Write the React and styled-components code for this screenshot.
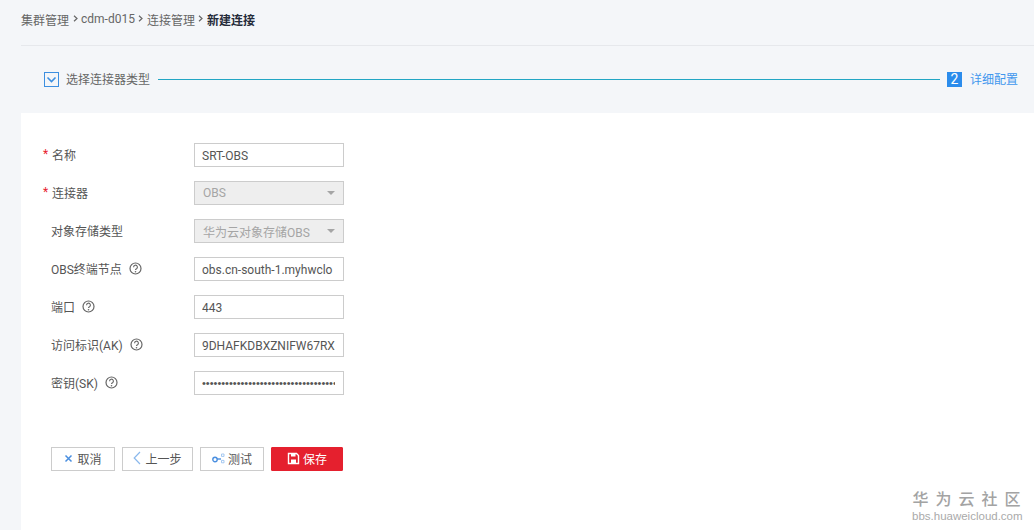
import React from "react";
import styled, { createGlobalStyle } from "styled-components";

const Global = createGlobalStyle`
  html, body { margin: 0; padding: 0; background: #f4f6f9; }
  body { font-family: "Roboto", "Noto Sans CJK SC", sans-serif; font-size: 12px; color: #666; }
`;
const Page = styled.div`
  position: relative;
  width: 1034px;
  height: 530px;
  overflow: hidden;
  display: flex;
  flex-direction: column;
  padding-left: 21px;
  box-sizing: border-box;
`;
const Crumbs = styled.div`
  border-bottom: 1px solid #e6e8ec;
  display: flex;
  align-items: center;
  padding-bottom: 7px;
  box-sizing: content-box;
  height: 38px;
  font-size: 12px;
  color: #666;
`;
const Crumb = styled.span`
  color: ${p => (p.$current ? "#252b3a" : "#666")};
  font-weight: ${p => (p.$current ? 700 : 400)};
`;
const Chevron = styled.svg`
  width: 5px;
  height: 7px;
  margin: 0 3.5px 2px 3.5px;
`;
const Stepper = styled.div`
  height: 67px;
  display: flex;
  align-items: center;
  padding-left: 23px;
`;
const Check = styled.span`
  width: 15px;
  height: 15px;
  display: flex;
  box-sizing: border-box;
  border: 1px solid #3d8fe0;
  align-items: center;
  justify-content: center;
  margin-right: 7px;
`;
const StepLine = styled.div`
  flex: none;
  width: 782px;
  height: 1px;
  background: #22a6c4;
  margin: 0 7px 0 8px;
`;
const StepNo = styled.span`
  width: 15px;
  height: 15px;
  background: #2b8cec;
  color: #fff;
  font-size: 14px;
  font-weight: 400;
  line-height: 15px;
  text-align: center;
  margin-right: 8px;
`;
const StepText = styled.span`
  color: ${p => (p.$active ? "#3f97ee" : "#666")};
  line-height: 15px;
  position: relative;
  top: 1px;
`;
const Panel = styled.main`
  flex: 1;
  background: #fff;
  padding: 30px 0 0 22px;
`;
const Row = styled.div`
  display: flex;
  align-items: center;
  height: 24px;
  margin-bottom: 14px;
`;
const Label = styled.label`
  width: 151px;
  flex: none;
  display: flex;
  align-items: center;
  padding-left: ${p => (p.$required ? 9 : 8)}px;
  padding-bottom: 2px;
  box-sizing: border-box;
  position: relative;
  color: #555;
`;
const Star = styled.span`
  position: absolute;
  left: 0;
  top: 1px;
  color: #e8212f;
`;
const Help = styled.svg`
  width: 13px;
  height: 13px;
  margin-left: 7px;
`;
const Input = styled.input`
  width: 150px;
  height: 24px;
  box-sizing: border-box;
  border: 1px solid #ccc;
  background: #fff;
  padding: 1px 8px 0 7px;
  font: 12px "Roboto", "Noto Sans CJK SC", sans-serif;
  color: #555;
  outline: none;
  &[type="password"] { font: 11px "Liberation Sans", sans-serif; padding-top: 0; }
`;
const Select = styled.div`
  width: 150px;
  height: 24px;
  box-sizing: border-box;
  border: 1px solid #ccc;
  background: #eee;
  color: #a5a5a5;
  padding: 0 8px 0 8px;
  display: flex;
  align-items: center;
  justify-content: space-between;
`;
const Caret = styled.span`
  width: 0;
  height: 0;
  border: 4px solid transparent;
  border-top: 4px solid #a5a5a5;
  border-bottom: 0;
`;
const Actions = styled.div`
  display: flex;
  gap: 7px;
  margin: 52px 0 0 8px;
`;
const Btn = styled.button`
  height: 24px;
  width: ${p => p.$w}px;
  box-sizing: border-box;
  border: 1px solid ${p => (p.$primary ? "#e5202e" : "#ccc")};
  background: ${p => (p.$primary ? "#e5202e" : "#fff")};
  color: ${p => (p.$primary ? "#fff" : "#555")};
  border-radius: ${p => (p.$primary ? "1px" : "0")};
  font: 12px "Roboto", "Noto Sans CJK SC", sans-serif;
  display: flex;
  align-items: center;
  justify-content: center;
  gap: ${p => p.$gap ?? 4}px;
  padding: 0 0 2px;
`;
const Watermark = styled.div`
  position: absolute;
  right: 13px;
  top: 491px;
  width: 109px;
  color: #a3a3a3;
  text-align: center;
`;
const WmTitle = styled.div`
  font-size: 16px;
  line-height: 18px;
  font-weight: 500;
  letter-spacing: 7px;
  margin-right: -7px;
  white-space: nowrap;
`;
const WmSub = styled.div`
  font-size: 11.5px;
  line-height: 14px;
  color: #aaa;
  font-family: "Liberation Sans", sans-serif;
  white-space: nowrap;
`;

const Chev = () => (
  <Chevron viewBox="0 0 5 7"><path d="M1 .8 4 3.5 1 6.2" fill="none" stroke="#666" strokeWidth="1.2" /></Chevron>
);
const Q = () => (
  <Help viewBox="0 0 13 13">
    <circle cx="6.5" cy="6.5" r="5.5" fill="none" stroke="#666" strokeWidth="1.2" />
    <path d="M4.6 5.2a1.9 1.9 0 1 1 2.9 1.5c-.7.4-1 .7-1 1.3" fill="none" stroke="#666" strokeWidth="1.1" />
    <circle cx="6.5" cy="9.7" r=".8" fill="#666" />
  </Help>
);

export default function App() {
  return (
    <Page>
      <Global />
      <Crumbs>
        <Crumb>集群管理</Crumb><Chev />
        <Crumb>cdm-d015</Crumb><Chev />
        <Crumb>连接管理</Crumb><Chev />
        <Crumb $current>新建连接</Crumb>
      </Crumbs>
      <Stepper>
        <Check>
          <svg width="11" height="9" viewBox="0 0 11 9"><path d="M1.5 2.5 5.5 6.5 9.5 2.5" fill="none" stroke="#3d8fe0" strokeWidth="1.6" /></svg>
        </Check>
        <StepText>选择连接器类型</StepText>
        <StepLine />
        <StepNo>2</StepNo>
        <StepText $active>详细配置</StepText>
      </Stepper>
      <Panel>
        <Row><Label $required><Star>*</Star>名称</Label><Input defaultValue="SRT-OBS" /></Row>
        <Row><Label $required><Star>*</Star>连接器</Label><Select>OBS<Caret /></Select></Row>
        <Row><Label>对象存储类型</Label><Select>华为云对象存储OBS<Caret /></Select></Row>
        <Row><Label>OBS终端节点<Q /></Label><Input defaultValue="obs.cn-south-1.myhwclo" /></Row>
        <Row><Label>端口<Q /></Label><Input defaultValue="443" /></Row>
        <Row><Label>访问标识(AK)<Q /></Label><Input defaultValue="9DHAFKDBXZNIFW67RX" /></Row>
        <Row><Label>密钥(SK)<Q /></Label><Input type="password" defaultValue="abcdefghijklmnopqrstuvwxyzabcdefghi" /></Row>
        <Actions>
          <Btn $w={64}>
            <svg width="9" height="9" viewBox="0 0 9 9"><path d="M1.5 1.5l6 6M7.5 1.5l-6 6" stroke="#4a8fe0" strokeWidth="1.5" /></svg>
            取消
          </Btn>
          <Btn $w={71}>
            <svg width="8" height="14" viewBox="0 0 8 14"><path d="M7 1 1.2 7 7 13" fill="none" stroke="#8ab8ec" strokeWidth="1.2" /></svg>
            上一步
          </Btn>
          <Btn $w={64} $gap={3}>
            <svg width="13" height="11" viewBox="0 0 13 11"><circle cx="3" cy="6.5" r="2.2" fill="none" stroke="#4a8fe0" strokeWidth="1.4" /><path d="M5 6h4" stroke="#4a8fe0" strokeWidth="1.4" /><path d="M9.5 1h2.5v2.4H9.5zM9.5 7.4h2.5v2.4H9.5z" fill="none" stroke="#9cc3ef" strokeWidth=".9" /></svg>
            测试
          </Btn>
          <Btn $w={72} $primary $gap={3}>
            <svg width="13" height="13" viewBox="0 0 13 13"><path d="M1.5 1.5h8l2 2v8h-10z" fill="none" stroke="#fff" strokeWidth="1.4" /><path d="M4 1.5h4.5v3H4zM4 7.5h5v4H4z" fill="#fff" /></svg>
            保存
          </Btn>
        </Actions>
      </Panel>
      <Watermark>
        <WmTitle>华为云社区</WmTitle>
        <WmSub>bbs.huaweicloud.com</WmSub>
      </Watermark>
    </Page>
  );
}
